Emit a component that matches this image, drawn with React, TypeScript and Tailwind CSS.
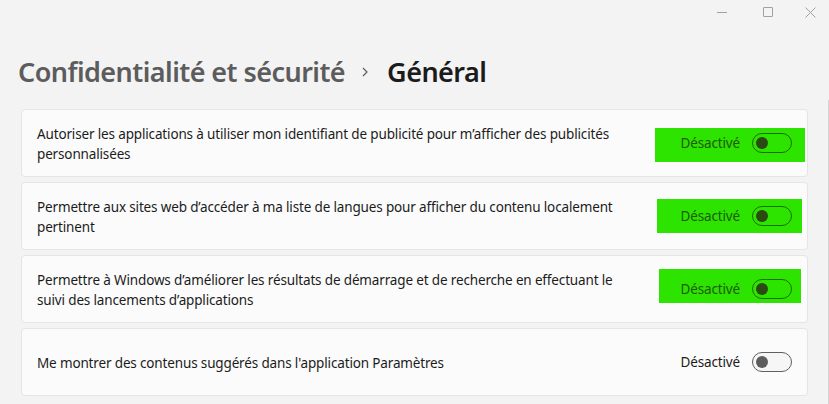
import React from "react";

type Row = {
  lines: string[];
  hl?: { top: number; right: number; width: number };
};

const rows: Row[] = [
  {
    lines: [
      "Autoriser les applications à utiliser mon identifiant de publicité pour m’afficher des publicités",
      "personnalisées",
    ],
    hl: { top: 18, right: 2, width: 150 },
  },
  {
    lines: [
      "Permettre aux sites web d’accéder à ma liste de langues pour afficher du contenu localement",
      "pertinent",
    ],
    hl: { top: 16, right: 5, width: 145 },
  },
  {
    lines: [
      "Permettre à Windows d’améliorer les résultats de démarrage et de recherche en effectuant le",
      "suivi des lancements d’applications",
    ],
    hl: { top: 13, right: 6, width: 142 },
  },
  {
    lines: ["Me montrer des contenus suggérés dans l'application Paramètres"],
  },
];

function Toggle({ green }: { green: boolean }) {
  return (
    <div
      className={
        "relative w-[40px] h-[20px] rounded-full border flex items-center " +
        (green ? "border-[#1d6e00]" : "border-[#5f5f5f] bg-[#f6f6f6]")
      }
    >
      <div
        className={
          "ml-[3px] w-[12px] h-[12px] rounded-full " +
          (green ? "bg-[#2b4a12]" : "bg-[#5d5d5d]")
        }
      />
    </div>
  );
}

export default function App() {
  return (
    <div
      className="relative w-[829px] h-[404px] bg-[#f3f3f3] overflow-hidden"
      style={{ fontFamily: '"Segoe UI", "Noto Sans", "Open Sans", sans-serif' }}
    >
      <div className="absolute right-0 top-[100px] bottom-0 w-px bg-[#d4d4d4]" />
      {/* title bar */}
      <div className="h-[24px] flex justify-end items-center">
        <div className="w-[46px] flex justify-center items-center">
          <div className="w-[10px] h-px bg-[#a0a0a0]" />
        </div>
        <div className="w-[46px] flex justify-center items-center">
          <div className="w-[10px] h-[10px] border border-[#a0a0a0] rounded-[1px]" />
        </div>
        <div className="w-[38px] flex justify-center items-center">
          <svg width="11" height="11" viewBox="0 0 11 11">
            <path d="M0.5 0.5 L10.5 10.5 M10.5 0.5 L0.5 10.5" stroke="#a0a0a0" strokeWidth="1" />
          </svg>
        </div>
      </div>
      {/* heading */}
      <div className="pl-[18px] mt-[28px] h-[40px] flex items-center text-[27px] font-semibold leading-[40px] tracking-[-0.55px]">
        <span className="text-[#5c5c5c]">Confidentialité et sécurité</span>
        <svg className="ml-[17px] mr-[19px]" width="6" height="10" viewBox="0 0 6 10">
          <path d="M1 1 L5 5 L1 9" fill="none" stroke="#5c5c5c" strokeWidth="1.2" />
        </svg>
        <span className="text-[#1b1b1b]">Général</span>
      </div>
      {/* cards */}
      <div className="mt-[17px] ml-[21px] w-[787px] flex flex-col gap-[5px]">
        {rows.map((r, i) => {
          const green = !!r.hl;
          return (
            <div
              key={i}
              className="relative h-[68px] bg-[#fbfbfb] border border-[#e5e5e5] rounded-[4px] flex items-center justify-between pl-[15px] pr-[15px]"
            >
              <div className="text-[13.5px] leading-[20px] text-[#1b1b1b] tracking-[-0.15px] pt-px">
                {r.lines.map((l, j) => (
                  <div key={j} className="whitespace-nowrap">
                    {l}
                  </div>
                ))}
              </div>
              {r.hl && (
                <div
                  className="absolute h-[34px] bg-[#2de300]"
                  style={{ top: r.hl.top, right: r.hl.right, width: r.hl.width }}
                />
              )}
              <div className="relative flex items-center gap-[12px]">
                <span className={"text-[13.5px] tracking-[-0.15px] " + (green ? "text-[#1e5a0c]" : "text-[#1b1b1b]")}>
                  Désactivé
                </span>
                <Toggle green={green} />
              </div>
            </div>
          );
        })}
      </div>
    </div>
  );
}
